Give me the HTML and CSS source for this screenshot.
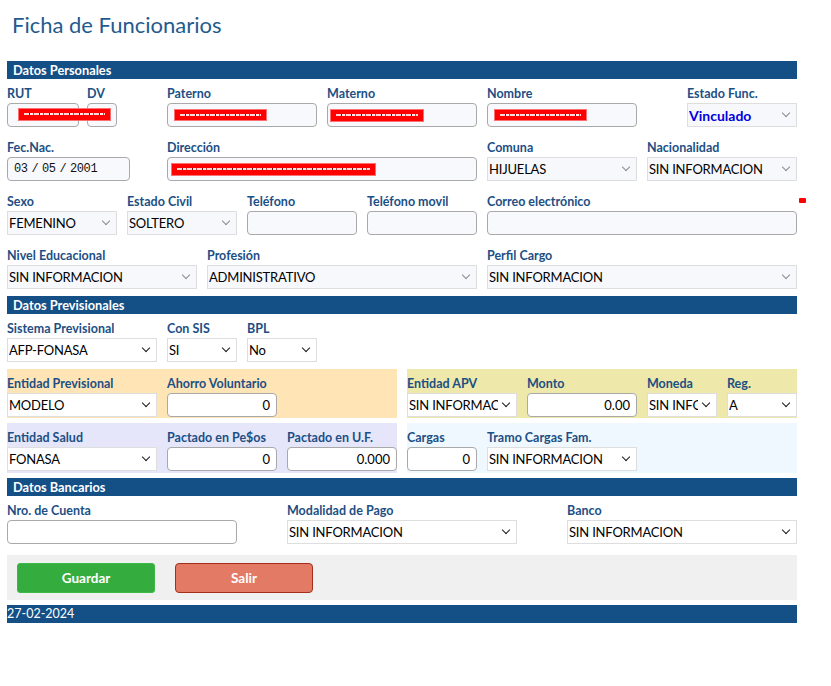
FILE: index.html
```html
<!DOCTYPE html>
<html lang="es">
<head>
<meta charset="utf-8">
<title>Ficha de Funcionarios</title>
<link rel="stylesheet" href="styles.css">
</head>
<body>
<div class="page">
  <h1 class="title">Ficha de Funcionarios</h1>

  <div class="sec">Datos Personales</div>
  <div class="row">
    <div class="f c2"><label>RUT</label><div class="ctl"><input class="txt w72" type="text"><span class="redact r-rut"></span></div></div>
    <div class="f c2"><label>DV</label><div class="ctl"><input class="txt w30" type="text"></div></div>
    <div class="f c4"><label>Paterno</label><div class="ctl"><input class="txt w150" type="text"><span class="redact r-std"></span></div></div>
    <div class="f c4"><label>Materno</label><div class="ctl"><input class="txt w150" type="text"><span class="redact r-std r-mat"></span></div></div>
    <div class="f c5"><label>Nombre</label><div class="ctl"><input class="txt w150" type="text"><span class="redact r-std"></span></div></div>
    <div class="f c3"><label>Estado Func.</label><span class="sel lt w110"><select class="vinc"><option>Vinculado</option></select></span></div>
  </div>
  <div class="row">
    <div class="f c4"><label>Fec.Nac.</label><input class="txt w123 date" type="text" value="03 / 05 / 2001"></div>
    <div class="f c8"><label>Dirección</label><div class="ctl"><input class="txt w310" type="text"><span class="redact r-dir"></span></div></div>
    <div class="f c4"><label>Comuna</label><span class="sel lt w150"><select><option>HIJUELAS</option></select></span></div>
    <div class="f c4"><label>Nacionalidad</label><span class="sel lt w150"><select><option>SIN INFORMACION</option></select></span></div>
  </div>
  <div class="row">
    <div class="f c3"><label>Sexo</label><span class="sel lt w110"><select><option>FEMENINO</option></select></span></div>
    <div class="f c3"><label>Estado Civil</label><span class="sel lt w110"><select><option>SOLTERO</option></select></span></div>
    <div class="f c3"><label>Teléfono</label><input class="txt w110" type="text"></div>
    <div class="f c3"><label>Teléfono movil</label><input class="txt w110" type="text"></div>
    <div class="f c8 mark"><label>Correo electrónico</label><input class="txt w310" type="text"><span class="dot"></span></div>
  </div>
  <div class="row">
    <div class="f c5"><label>Nivel Educacional</label><span class="sel lt w190"><select><option>SIN INFORMACION</option></select></span></div>
    <div class="f c7"><label>Profesión</label><span class="sel lt w270"><select><option>ADMINISTRATIVO</option></select></span></div>
    <div class="f c8"><label>Perfil Cargo</label><span class="sel lt w310"><select><option>SIN INFORMACION</option></select></span></div>
  </div>

  <div class="sec sec2">Datos Previsionales</div>
  <div class="row">
    <div class="f c4"><label>Sistema Previsional</label><span class="sel dk w150"><select><option>AFP-FONASA</option></select></span></div>
    <div class="f c2"><label>Con SIS</label><span class="sel dk w70"><select><option>SI</option></select></span></div>
    <div class="f c2"><label>BPL</label><span class="sel dk w70"><select><option>No</option></select></span></div>
  </div>
  <div class="bands first">
    <div class="band orange">
      <div class="f c4"><label>Entidad Previsional</label><span class="sel dk w150"><select><option>MODELO</option></select></span></div>
      <div class="f c3"><label>Ahorro Voluntario</label><input class="num w110" type="text" value="0"></div>
    </div>
    <div class="band yellow">
      <div class="f c3"><label>Entidad APV</label><span class="sel dk w110"><select><option>SIN INFORMACION</option></select></span></div>
      <div class="f c3"><label>Monto</label><input class="num w110" type="text" value="0.00"></div>
      <div class="f c2"><label>Moneda</label><span class="sel dk w70"><select><option>SIN INFORMACION</option></select></span></div>
      <div class="f c2"><label>Reg.</label><span class="sel dk w70"><select><option>A</option></select></span></div>
    </div>
  </div>
  <div class="bands second">
    <div class="band lavender">
      <div class="f c4"><label>Entidad Salud</label><span class="sel dk w150"><select><option>FONASA</option></select></span></div>
      <div class="f c3"><label>Pactado en Pe$os</label><input class="num w110" type="text" value="0"></div>
      <div class="f c3"><label>Pactado en U.F.</label><input class="num w110" type="text" value="0.000"></div>
    </div>
    <div class="band alice">
      <div class="f c2"><label>Cargas</label><input class="num w70" type="text" value="0"></div>
      <div class="f c4"><label>Tramo Cargas Fam.</label><span class="sel dk w150"><select><option>SIN INFORMACION</option></select></span></div>
    </div>
  </div>

  <div class="sec sec3">Datos Bancarios</div>
  <div class="row">
    <div class="f c7"><label>Nro. de Cuenta</label><input class="txt white w230" type="text"></div>
    <div class="f c7"><label>Modalidad de Pago</label><span class="sel dk w230"><select><option>SIN INFORMACION</option></select></span></div>
    <div class="f c6"><label>Banco</label><span class="sel dk w230"><select><option>SIN INFORMACION</option></select></span></div>
  </div>

  <div class="actions">
    <button class="btn save" type="button">Guardar</button>
    <button class="btn exit" type="button">Salir</button>
  </div>
  <div class="footer">27-02-2024</div>
</div>
</body>
</html>
```

FILE: styles.css
```css
* { box-sizing: border-box; }

body {
  margin: 0;
  background: #ffffff;
  font-family: Lato, "Liberation Sans", sans-serif;
}

.page {
  padding-left: 7px;
  width: 807px;
}

.title {
  margin: 11px 0 23px 5px;
  font-family: Lato, sans-serif;
  font-weight: 400;
  font-size: 22px;
  line-height: 27px;
  color: #1f5b8e;
}

.sec {
  width: 790px;
  height: 18px;
  padding-left: 6px;
  background: #144f86;
  color: #ffffff;
  font-weight: 700;
  font-size: 12.8px;
  line-height: 18px;
}

.sec2 { margin-top: 1px; }

.row {
  display: grid;
  grid-template-columns: repeat(20, 40px);
  padding: 6px 0;
}

.f {
  display: flex;
  flex-direction: column;
  gap: 2px;
  position: relative;
}

.f label {
  display: block;
  height: 16px;
  font-weight: 700;
  font-size: 12.5px;
  line-height: 18px;
  color: #1c4f84;
  white-space: nowrap;
}

.c2 { grid-column: span 2; }
.c3 { grid-column: span 3; }
.c4 { grid-column: span 4; }
.c5 { grid-column: span 5; }
.c6 { grid-column: span 6; }
.c7 { grid-column: span 7; }
.c8 { grid-column: span 8; }

.w30 { width: 30px; }
.w70 { width: 70px; }
.w72 { width: 72px; }
.w110 { width: 110px; }
.w123 { width: 123px; }
.w150 { width: 150px; }
.w190 { width: 190px; }
.w230 { width: 230px; }
.w270 { width: 270px; }
.w310 { width: 310px; }

.ctl { position: relative; }

.txt, .num {
  display: block;
  height: 24px;
  margin: 0;
  border: 1px solid #a9a9a9;
  border-radius: 4px;
  background: #f8f9fc;
  padding: 0 6px;
  font-family: Lato, sans-serif;
  font-size: 13px;
  color: #000;
}

.txt.white { background: #ffffff; }

.num {
  background: #ffffff;
  text-align: right;
  padding-right: 6px;
}

.date {
  font-family: "Liberation Mono", monospace;
  font-size: 12px;
  letter-spacing: -0.4px;
  word-spacing: -3px;
  color: #111;
}

.sel {
  display: block;
  position: relative;
  height: 24px;
}

.sel select {
  -webkit-appearance: none;
  appearance: none;
  display: block;
  width: 100%;
  height: 24px;
  margin: 0;
  border: 1px solid #dedede;
  border-radius: 0;
  background: #ffffff;
  padding: 0 18px 0 1px;
  font-family: Lato, sans-serif;
  font-size: 13px;
  letter-spacing: -0.2px;
  color: #000;
  outline: none;
}

.sel.lt select { background: #f7f8fc; }

.sel::after {
  content: "";
  position: absolute;
  right: 8px;
  top: 7px;
  width: 5px;
  height: 5px;
  border-right: 1px solid #8a8a8a;
  border-bottom: 1px solid #8a8a8a;
  transform: rotate(45deg);
  pointer-events: none;
}

.sel.dk::after {
  width: 5px;
  height: 5px;
  border-right: 1.6px solid #1a1a1a;
  border-bottom: 1.6px solid #1a1a1a;
}

.sel select.vinc {
  color: #0000dd;
  font-weight: 700;
  font-size: 14px;
  letter-spacing: 0;
}

/* redaction overlays */
.redact {
  position: absolute;
  z-index: 2;
  top: 6px;
  left: 7px;
  width: 93px;
  height: 12px;
  background: #ff0000;
  border: 1px solid #ff7070;
}

.redact::after {
  content: "";
  position: absolute;
  left: 5px;
  right: 5px;
  top: 4px;
  height: 2px;
  background: repeating-linear-gradient(90deg, #ffd6d6 0 5px, #7a1010 5px 6px, #ffe8e8 6px 9px, #c05050 9px 10px);
}

.r-rut { left: 11px; top: 5px; height: 13px; }
.r-mat { left: 3px; width: 94px; height: 13px; }
.r-dir { left: 4px; top: 6px; width: 205px; height: 13px; }

.dot {
  position: absolute;
  left: 312px;
  top: 5px;
  width: 7px;
  height: 5px;
  border-radius: 1px;
  background: #ff0000;
}

/* coloured bands */
.bands {
  display: flex;
  gap: 10px;
  width: 790px;
}

.bands.first { margin-top: 1px; }
.bands.second { margin-top: 5px; }

.band {
  width: 390px;
  display: grid;
  grid-template-columns: repeat(9, 40px) 30px;
  align-content: start;
}

.first .band { padding: 6px 0 1px; }
.second .band { padding: 6px 0 2px; }

.orange { background: #ffe4b5; }
.yellow { background: #eee8aa; }
.lavender { background: #e6e6fa; }
.alice { background: #f0f8ff; }

.sec3 { margin-top: 5px; }

/* actions */
.actions {
  width: 790px;
  margin-top: 5px;
  background: #f0f0f0;
  padding: 8px 10px 7px;
  display: flex;
  gap: 20px;
}

.btn {
  width: 138px;
  height: 30px;
  margin: 0;
  font-family: Lato, sans-serif;
  font-weight: 700;
  font-size: 13.5px;
  color: #ffffff;
  cursor: pointer;
}

.save {
  background: #35ad3e;
  border: 1px solid #3cba45;
  border-radius: 3px;
}

.exit {
  background: #e37a66;
  border: 1.5px solid #a3301b;
  border-radius: 4px;
}

.footer {
  width: 790px;
  height: 18px;
  margin-top: 5px;
  background: #144f86;
  color: #ffffff;
  font-size: 12.5px;
  line-height: 18px;
}
```
